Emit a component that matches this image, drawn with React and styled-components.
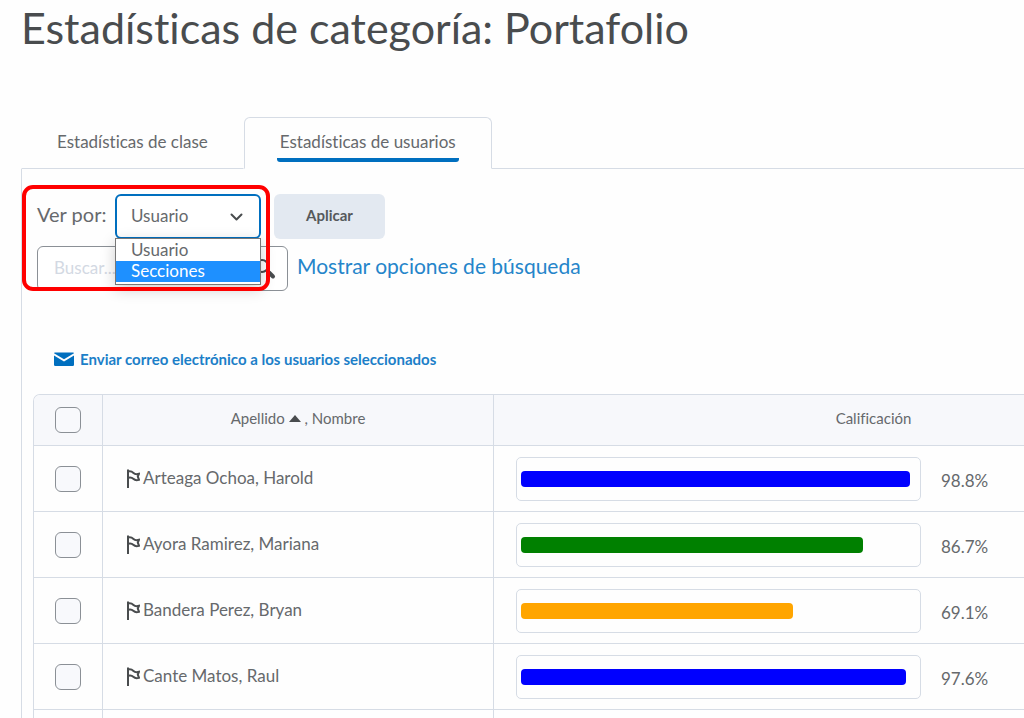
import React, { useState } from "react";
import styled, { createGlobalStyle } from "styled-components";

const ink = "#494c4e";
const soft = "#66696c";
const line = "#d6dce5";
const blue = "#006fbf";

const GlobalStyle = createGlobalStyle`
  *, *::before, *::after { box-sizing: border-box; }
  body {
    margin: 0;
    background: #fefefe;
    color: ${soft};
    font-family: Lato, "Liberation Sans", sans-serif;
    font-size: 17px;
    font-variant-ligatures: none;
  }
  button, input, select { font: inherit; color: inherit; font-variant-ligatures: none; }
`;

const Page = styled.main`
  height: 100vh;
  overflow: hidden;
  padding-left: 21px;
`;

const Title = styled.h1`
  margin: 0 0 61px;
  font-size: 43px;
  line-height: 56px;
  font-weight: 400;
  color: ${ink};
`;

const Tabs = styled.div`
  display: flex;
  &::after {
    content: "";
    flex: 1;
    border-bottom: 1px solid ${line};
  }
`;

const Tab = styled.button`
  height: 52px;
  padding: 0 32px;
  background: none;
  border: 1px solid ${(p) => (p.$active ? line : "transparent")};
  border-bottom-color: ${(p) => (p.$active ? "transparent" : line)};
  border-radius: ${(p) => (p.$active ? "6px 6px 0 0" : "0")};
`;

const TabLabel = styled.span`
  display: block;
  height: 34px;
  margin-top: 4px;
  padding: 3px 3px 0;
  line-height: 22px;
  border-bottom: 4px solid ${(p) => (p.$active ? blue : "transparent")};
  border-radius: 3px;
`;

const Panel = styled.section`
  border-left: 1px solid ${line};
  padding: 25px 0 0 11px;
`;

const Filters = styled.div`
  position: relative;
  display: flex;
  flex-direction: column;
  gap: 7px;
  padding-left: 4px;
`;

const FilterRow = styled.div`
  display: flex;
  align-items: center;
  height: 45px;
`;

const FilterLabel = styled.label`
  width: 78px;
  padding-bottom: 6px;
  font-size: 20px;
  line-height: 24px;
`;

const SelectBox = styled.div`
  position: relative;
  width: 146px;
  margin-right: 13px;
`;

const Select = styled.select`
  display: block;
  appearance: none;
  width: 100%;
  height: 45px;
  padding: 0 14px 2px;
  background: #fff;
  border: 2px solid ${blue};
  border-radius: 6px;
  outline: none;
`;

const Chevron = styled.svg`
  position: absolute;
  right: 18px;
  top: 18px;
  pointer-events: none;
`;

const Options = styled.ul`
  position: absolute;
  z-index: 2;
  top: 44px;
  left: 0;
  right: 0;
  margin: 0;
  padding: 1px 0 2px;
  list-style: none;
  background: #fff;
  border: 1px solid #777;
  box-shadow: 0 4px 14px rgba(0, 0, 0, 0.2);
`;

const Option = styled.li`
  height: 21px;
  padding-left: 15px;
  line-height: 19px;
  color: ${(p) => (p.$selected ? "#fff" : soft)};
  background: ${(p) => (p.$selected ? "#1e90ff" : "#fff")};
`;

const Apply = styled.button`
  width: 111px;
  height: 45px;
  padding: 0 0 3px;
  border: 0;
  border-radius: 6px;
  background: #e3e9f1;
  color: #56595c;
  font-size: 15px;
  font-weight: 700;
`;

const SearchBox = styled.div`
  display: flex;
  align-items: center;
  width: 251px;
  height: 45px;
  margin-right: 9px;
  padding: 0 11px 0 16px;
  background: #fff;
  border: 1px solid #8b9096;
  border-radius: 6px;
`;

const SearchInput = styled.input`
  flex: 1;
  min-width: 0;
  padding: 0 0 2px;
  border: 0;
  outline: 0;
  background: none;
  &::placeholder { color: #d3d9e3; opacity: 1; }
`;

const SearchButton = styled.button`
  display: flex;
  padding: 0;
  border: 0;
  background: none;
`;

const MoreLink = styled.a`
  padding-bottom: 6px;
  font-size: 21px;
  line-height: 24px;
  color: #2585ca;
  text-decoration: none;
`;

const Highlight = styled.div`
  position: absolute;
  z-index: 3;
  left: -11px;
  top: -9px;
  width: 248px;
  height: 106px;
  border: 4px solid #f00;
  border-radius: 11px;
  pointer-events: none;
`;

const MailLink = styled.a`
  display: flex;
  align-items: center;
  gap: 6px;
  margin: 58px 0 25px 21px;
  font-size: 15px;
  line-height: 20px;
  font-weight: 700;
  color: #1c7fc8;
  text-decoration: none;
`;

const Table = styled.table`
  width: 120%;
  min-width: 1221px;
  table-layout: fixed;
  border-collapse: separate;
  border-spacing: 0;
  border: 1px solid ${line};
  border-bottom: 0;
  border-radius: 7px 0 0 0;
  overflow: hidden;
`;

const HeadCell = styled.th`
  width: ${(p) => p.$width || "auto"};
  height: 51px;
  padding: 0 0 ${(p) => (p.$text ? "4px" : "0")};
  font-size: 15px;
  font-weight: 400;
  text-align: center;
  background: #f7f8fb;
  border-bottom: 1px solid ${line};
  & + & { border-left: 1px solid ${line}; }
`;

const Cell = styled.td`
  height: 66px;
  padding: 0 ${(p) => p.$pad || "0"};
  text-align: ${(p) => (p.$center ? "center" : "left")};
  border-bottom: 1px solid ${line};
  & + & { border-left: 1px solid ${line}; }
`;

const Check = styled.input`
  appearance: none;
  display: block;
  width: 26px;
  height: 26px;
  margin: 0 auto;
  background: #f8f9fc;
  border: 1px solid #8b9096;
  border-radius: 6px;
`;

const SortButton = styled.button`
  display: inline-flex;
  align-items: center;
  gap: 4px;
  padding: 0;
  border: 0;
  background: none;
`;

const Student = styled.div`
  display: flex;
  align-items: center;
  gap: 3px;
`;

const StudentName = styled.span`
  padding-bottom: 1px;
  line-height: 22px;
`;

const Score = styled.div`
  display: flex;
  align-items: center;
  gap: 20px;
`;

const Track = styled.div`
  display: flex;
  align-items: center;
  width: 405px;
  height: 44px;
  padding: 0 5px 0 4px;
  border: 1px solid ${line};
  border-radius: 5px;
`;

const Fill = styled.div`
  height: 16px;
  border-radius: 4px;
  background: ${(p) => p.$color};
`;

const Percent = styled.span`
  padding-top: 5px;
  line-height: 22px;
`;

const Flag = () => (
  <svg width="13" height="20" viewBox="0 0 13 20" fill="none" stroke={ink} strokeWidth="2" aria-hidden="true">
    <path d="M1 0.500v18.500" />
    <path d="M1 2.500C4 1.500 5 2.500 6.500 4S9.500 5.500 12 4.800L10.800 7.500 12 10.800C9 11.800 7.500 11 6.300 9.800S3.500 8 1 8.800" />
  </svg>
);

const students = [
  { name: "Arteaga Ochoa, Harold", score: 98.8, color: "#0000ff" },
  { name: "Ayora Ramirez, Mariana", score: 86.7, color: "#008000" },
  { name: "Bandera Perez, Bryan", score: 69.1, color: "#ffa500" },
  { name: "Cante Matos, Raul", score: 97.6, color: "#0000ff" },
];

export default function App() {
  const [view, setView] = useState("Usuario");
  return (
    <>
      <GlobalStyle />
      <Page>
        <Title>Estadísticas de categoría: Portafolio</Title>
        <Tabs role="tablist">
          <Tab role="tab" aria-selected="false"><TabLabel>Estadísticas de clase</TabLabel></Tab>
          <Tab role="tab" aria-selected="true" $active><TabLabel $active>Estadísticas de usuarios</TabLabel></Tab>
        </Tabs>
        <Panel>
          <Filters>
            <FilterRow>
              <FilterLabel htmlFor="view">Ver por:</FilterLabel>
              <SelectBox>
                <Select id="view" value={view} onChange={(e) => setView(e.target.value)}>
                  <option>Usuario</option>
                  <option>Secciones</option>
                </Select>
                <Chevron width="13" height="10" viewBox="0 0 13 10" fill="none" stroke={ink} strokeWidth="2" strokeLinecap="round" strokeLinejoin="round" aria-hidden="true">
                  <path d="M1.500 2.500l5 5 5-5" />
                </Chevron>
                <Options role="listbox">
                  <Option role="option">Usuario</Option>
                  <Option role="option" aria-selected="true" $selected>Secciones</Option>
                </Options>
              </SelectBox>
              <Apply type="button">Aplicar</Apply>
            </FilterRow>
            <FilterRow>
              <SearchBox>
                <SearchInput type="text" placeholder="Buscar..." aria-label="Buscar" />
                <SearchButton type="button" aria-label="Buscar">
                  <svg width="22" height="22" viewBox="0 0 22 22" fill="none" stroke={ink} aria-hidden="true">
                    <circle cx="8" cy="8" r="6" strokeWidth="2" />
                    <path d="M12.500 12.500l2.500 2.500" strokeWidth="2" />
                    <path d="M15 14.500l4 4" strokeWidth="4" strokeLinecap="round" />
                  </svg>
                </SearchButton>
              </SearchBox>
              <MoreLink href="#opciones">Mostrar opciones de búsqueda</MoreLink>
            </FilterRow>
            <Highlight />
          </Filters>
          <MailLink href="#correo">
            <svg width="20" height="14" viewBox="0 0 20 14" aria-hidden="true">
              <path fill={blue} d="M0 1.200Q0 0.500 1 0.500h18Q20 0.500 20 1.200L10 7.200z" />
              <path fill={blue} d="M0 3.500l10 6 10-6v9.300Q20 14 18.800 14H1.200Q0 14 0 12.800z" />
            </svg>
            Enviar correo electrónico a los usuarios seleccionados
          </MailLink>
          <Table>
            <thead>
              <tr>
                <HeadCell $width="68px"><Check type="checkbox" aria-label="Seleccionar todo" /></HeadCell>
                <HeadCell $width="391px" $text>
                  <SortButton type="button">
                    Apellido
                    <svg width="12" height="7" viewBox="0 0 12 7" aria-hidden="true"><path d="M6 0L12 7H0z" fill={ink} /></svg>
                  </SortButton>{" "}
                  , Nombre
                </HeadCell>
                <HeadCell $text>Calificación</HeadCell>
              </tr>
            </thead>
            <tbody>
              {students.map((s) => (
                <tr key={s.name}>
                  <Cell $center><Check type="checkbox" aria-label={s.name} /></Cell>
                  <Cell $pad="24px"><Student><Flag /><StudentName>{s.name}</StudentName></Student></Cell>
                  <Cell $pad="22px">
                    <Score>
                      <Track><Fill $color={s.color} style={{ width: `${s.score}%` }} /></Track>
                      <Percent>{s.score}%</Percent>
                    </Score>
                  </Cell>
                </tr>
              ))}
              <tr><Cell /><Cell /><Cell /></tr>
            </tbody>
          </Table>
        </Panel>
      </Page>
    </>
  );
}
